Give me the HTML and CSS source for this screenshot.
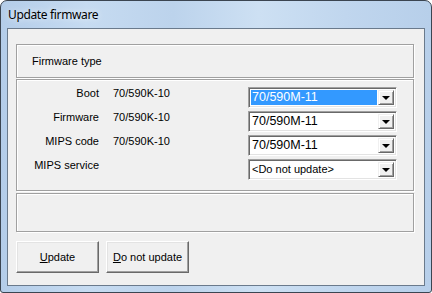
FILE: index.html
```html
<!DOCTYPE html>
<html>
<head>
<meta charset="utf-8">
<link rel="stylesheet" href="styles.css">
</head>
<body>
<div class="window">
  <div class="titlebar">Update firmware</div>
  <div class="client">
    <div class="etched header">Firmware type</div>
    <div class="etched rows">
      <div class="row">
        <span class="label">Boot</span><span class="value">70/590K-10</span>
        <div class="combo"><span class="ctext num selected">70/590M-11</span><span class="cbtn"><i class="arrow"></i></span></div>
      </div>
      <div class="row">
        <span class="label">Firmware</span><span class="value">70/590K-10</span>
        <div class="combo"><span class="ctext num">70/590M-11</span><span class="cbtn"><i class="arrow"></i></span></div>
      </div>
      <div class="row">
        <span class="label">MIPS code</span><span class="value">70/590K-10</span>
        <div class="combo"><span class="ctext num">70/590M-11</span><span class="cbtn"><i class="arrow"></i></span></div>
      </div>
      <div class="row">
        <span class="label">MIPS service</span><span class="value"></span>
        <div class="combo"><span class="ctext">&lt;Do not update&gt;</span><span class="cbtn"><i class="arrow"></i></span></div>
      </div>
    </div>
    <div class="etched status"></div>
    <div class="buttons">
      <button class="btn"><u>U</u>pdate</button>
      <button class="btn"><u>D</u>o not update</button>
    </div>
  </div>
</div>
</body>
</html>
```
FILE: styles.css
```css
html, body {
  margin: 0;
  padding: 0;
  width: 432px;
  height: 293px;
  overflow: hidden;
  background: #ffffff;
}
.window {
  box-sizing: border-box;
  width: 432px;
  height: 293px;
  border: 1px solid #3b4551;
  border-radius: 7px 7px 3px 3px;
  background: linear-gradient(90deg, #b4cde9 0%, #c6dbf1 20%, #bcd3ec 40%, #cde0f3 60%, #c0d6ee 80%, #b7cfea 100%);
  display: flex;
  flex-direction: column;
  padding: 0 6px 6px 6px;
  font-family: "Liberation Sans", Arial, sans-serif;
  font-size: 11px;
  color: #000;
}
.titlebar {
  height: 27px;
  line-height: 28px;
  padding-left: 1px;
  font-family: "Noto Sans", "Open Sans", sans-serif;
  font-size: 12px;
  letter-spacing: -0.35px;
  color: #000;
  text-shadow: 0 0 6px rgba(255,255,255,0.9);
  flex: none;
}
.client {
  flex: 1;
  background: #f0f0f0;
  border: 1px solid #6a7a8c;
  padding: 15px 10px 0 8px;
  display: flex;
  flex-direction: column;
}
.etched {
  border: 1px solid #a0a0a0;
  box-shadow: inset 1px 1px #ffffff, 1px 1px #ffffff;
}
.header {
  height: 32px;
  box-sizing: content-box;
  line-height: 32px;
  padding-left: 15px;
  flex: none;
}
.rows {
  margin-top: 1px;
  height: 103px;
  padding: 7px 0 0 0;
  box-sizing: content-box;
  display: flex;
  flex-direction: column;
  gap: 3px;
  flex: none;
}
.row {
  display: grid;
  grid-template-columns: 82px 149px 149px;
  height: 21px;
  align-items: start;
}
.label {
  text-align: right;
  line-height: 13px;
}
.value {
  padding-left: 14px;
  line-height: 13px;
}
.combo {
  box-sizing: border-box;
  height: 21px;
  width: 149px;
  border-top: 1px solid #a0a0a0;
  border-left: 1px solid #a0a0a0;
  border-right: 1px solid #ffffff;
  border-bottom: 1px solid #ffffff;
  box-shadow: inset 1px 1px #696969, inset -1px -1px #e3e3e3;
  background: #ffffff;
  display: flex;
  align-items: stretch;
  padding: 2px;
}
.ctext {
  flex: 1;
  line-height: 15px;
  padding-left: 1px;
  white-space: nowrap;
}
.ctext.num {
  font-size: 12.5px;
}
.ctext.selected {
  background: #3399ff;
  color: #ffffff;
  margin-right: 1px;
}
.cbtn {
  box-sizing: border-box;
  width: 16px;
  background: #f0f0f0;
  border-top: 1px solid #f0f0f0;
  border-left: 1px solid #f0f0f0;
  border-right: 1px solid #696969;
  border-bottom: 1px solid #696969;
  box-shadow: inset 1px 1px #ffffff, inset -1px -1px #a0a0a0;
  display: flex;
  align-items: center;
  justify-content: center;
}
.arrow {
  display: block;
  width: 0;
  height: 0;
  border-left: 4px solid transparent;
  border-right: 4px solid transparent;
  border-top: 4px solid #000;
  margin-top: 1px;
}
.status {
  margin-top: 2px;
  height: 37px;
  box-sizing: content-box;
  flex: none;
}
.buttons {
  display: flex;
  gap: 7px;
  margin-top: 9px;
}
.btn {
  box-sizing: border-box;
  width: 83px;
  height: 32px;
  background: #f0f0f0;
  border-top: 1px solid #ffffff;
  border-left: 1px solid #ffffff;
  border-right: 1px solid #696969;
  border-bottom: 1px solid #696969;
  box-shadow: inset -1px -1px #a0a0a0, inset 1px 1px #e3e3e3;
  font-family: "Liberation Sans", Arial, sans-serif;
  font-size: 11px;
  color: #000;
  padding: 0;
  margin: 0;
}
```
